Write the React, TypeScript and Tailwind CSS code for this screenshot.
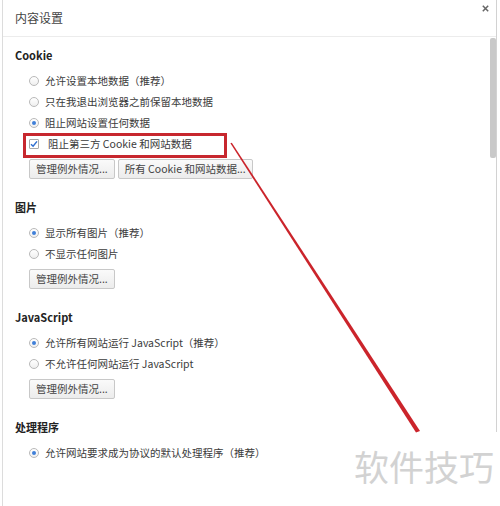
import React from "react";

function Radio({ checked }: { checked?: boolean }) {
  return (
    <span className="flex h-[10px] w-[10px] shrink-0 items-center justify-center rounded-full border border-[#b9b9b9] bg-gradient-to-b from-white to-[#efefef]">
      {checked ? <span className="h-[4px] w-[4px] rounded-full bg-[#3f7fd8]" /> : null}
    </span>
  );
}

function RadioRow({ label, checked }: { label: string; checked?: boolean }) {
  return (
    <div className="flex h-[21px] items-center pl-[14px]">
      <Radio checked={checked} />
      <span className="ml-[6px] whitespace-nowrap">{label}</span>
    </div>
  );
}

function Btn({ children }: { children: React.ReactNode }) {
  return (
    <div className="flex h-[20px] items-center whitespace-nowrap rounded-[2px] border border-[#c8c8c8] bg-gradient-to-b from-[#fafafa] to-[#ececec] px-[6px] text-[#444]">
      {children}
    </div>
  );
}

function Heading({ children }: { children: React.ReactNode }) {
  return <div className="flex h-[20px] items-center text-[11px] font-bold text-[#222]">{children}</div>;
}

export default function App() {
  return (
    <div
      className="relative flex h-[506px] w-[500px] overflow-hidden bg-white text-[10.5px] text-[#3b3b3b]"
      style={{ fontFamily: '"Noto Sans CJK SC", "Noto Sans", sans-serif' }}
    >
      <div className="w-[2px] shrink-0" />
      <div className="w-px shrink-0 bg-[#dcdcdc]" />
      <div className="flex min-w-0 flex-1 flex-col">
        <div className="flex h-[37px] shrink-0 justify-between border-b border-[#ececec] pl-[12px]">
          <div className="self-center text-[12px] text-[#444]">内容设置</div>
          <svg className="mr-[7px] mt-[5px]" width="7" height="7" viewBox="0 0 7 7">
            <path d="M0.8 0.8 L6.2 6.2 M6.2 0.8 L0.8 6.2" stroke="#666" strokeWidth="1.5" />
          </svg>
        </div>
        <div className="flex min-h-0 flex-1">
          <div className="flex-1 pl-[12px] pt-[8px]">
            <Heading>Cookie</Heading>
            <div className="mt-[5px]">
              <RadioRow label="允许设置本地数据（推荐）" />
              <RadioRow label="只在我退出浏览器之前保留本地数据" />
              <RadioRow label="阻止网站设置任何数据" checked />
              <div className="flex h-[21px] items-center pl-[14px]">
                <span className="flex h-[10px] w-[10px] shrink-0 items-center justify-center rounded-[1px] border border-[#a9a9a9] bg-white">
                  <svg width="8" height="8" viewBox="0 0 8 8">
                    <path d="M1 4.2 L3.1 6.2 L7 1.4" fill="none" stroke="#2f6fd0" strokeWidth="1.5" />
                  </svg>
                </span>
                <span className="ml-[9px] whitespace-nowrap">阻止第三方 Cookie 和网站数据</span>
              </div>
            </div>
            <div className="mt-[5px] flex gap-[3px] pl-[14px]">
              <Btn>管理例外情况...</Btn>
              <Btn>所有 Cookie 和网站数据...</Btn>
            </div>

            <div className="mt-[18px]">
              <Heading>图片</Heading>
            </div>
            <div className="mt-[5px]">
              <RadioRow label="显示所有图片（推荐）" checked />
              <RadioRow label="不显示任何图片" />
            </div>
            <div className="mt-[5px] flex pl-[14px]">
              <Btn>管理例外情况...</Btn>
            </div>

            <div className="mt-[18px]">
              <Heading>JavaScript</Heading>
            </div>
            <div className="mt-[5px]">
              <RadioRow label="允许所有网站运行 JavaScript（推荐）" checked />
              <RadioRow label="不允许任何网站运行 JavaScript" />
            </div>
            <div className="mt-[5px] flex pl-[14px]">
              <Btn>管理例外情况...</Btn>
            </div>

            <div className="mt-[18px]">
              <Heading>处理程序</Heading>
            </div>
            <div className="mt-[5px]">
              <RadioRow label="允许网站要求成为协议的默认处理程序（推荐）" checked />
            </div>
          </div>
          <div className="w-[6px] shrink-0 pt-[1px]">
            <div className="h-[120px] w-[6px] rounded-[2px] bg-[#c9c9c9]" />
          </div>
        </div>
      </div>
      <div className="h-[432px] w-px shrink-0 bg-[#d2d2d2]" />
      <div className="w-[3px] shrink-0" />

      {/* annotation: red box */}
      <div className="pointer-events-none absolute left-[23px] top-[133px] h-[25px] w-[204px] border-[3px] border-[#c7272e]" />
      {/* annotation: arrow line */}
      <svg className="pointer-events-none absolute left-0 top-0" width="500" height="506" viewBox="0 0 500 506">
        <polygon points="230.4,143.3 231.8,142.7 420,431 416,432.5" fill="#cb242b" />
      </svg>
      {/* watermark */}
      <div className="pointer-events-none absolute left-[354px] top-[444px] text-[35px] leading-[44px] text-[#d2d2d2]">
        软件技巧
      </div>
    </div>
  );
}
